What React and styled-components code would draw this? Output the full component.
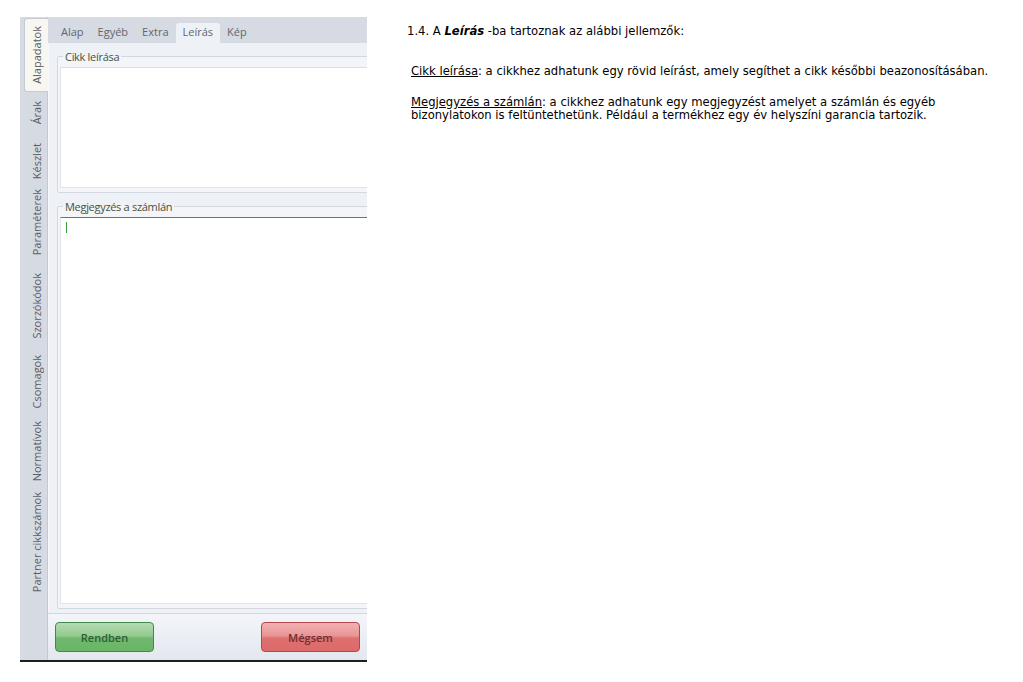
import React from 'react'
import styled, { createGlobalStyle } from 'styled-components'

const sideTabs = [
  { label: 'Alapadatok', h: 74, active: true },
  { label: 'Árak', h: 42 },
  { label: 'Készlet', h: 54 },
  { label: 'Paraméterek', h: 68 },
  { label: 'Szorzókódok', h: 100 },
  { label: 'Csomagok', h: 52 },
  { label: 'Normatívok', h: 86 },
  { label: 'Partner cikkszámok', h: 96 },
]

const topTabs = ['Alap', 'Egyéb', 'Extra', 'Leírás', 'Kép']

const App = () => {
  return (
    <Page>
      <GlobalStyle />
      <Window>
        <SideStrip>
          {sideTabs.map((t) => (
            <SideTab key={t.label} $h={t.h} $active={t.active}>
              <SideLabel>{t.label}</SideLabel>
            </SideTab>
          ))}
        </SideStrip>
        <Main>
          <TopTabs>
            {topTabs.map((t) => (
              <TopTab key={t} $active={t === 'Leírás'}>{t}</TopTab>
            ))}
          </TopTabs>
          <Content>
            <Group>
              <Legend>Cikk leírása</Legend>
              <Field $h={121} />
            </Group>
            <Group>
              <Legend>Megjegyzés a számlán</Legend>
              <Field $h={387} $focused>
                <Caret />
              </Field>
            </Group>
          </Content>
          <ButtonBar>
            <Button $kind="ok">Rendben</Button>
            <Button $kind="cancel">Mégsem</Button>
          </ButtonBar>
        </Main>
      </Window>

      <Doc>
        <Para>
          1.4. A <Strong>Leírás</Strong> -ba tartoznak az alábbi jellemzők:
        </Para>
        <Para $gap={27} $indent>
          <U>Cikk leírása</U>: a cikkhez adhatunk egy rövid leírást, amely segíthet a cikk későbbi beazonosításában.
        </Para>
        <Para $gap={18} $indent>
          <U>Megjegyzés a számlán</U>: a cikkhez adhatunk egy megjegyzést amelyet a számlán és egyéb
          <br />
          bizonylatokon is feltüntethetünk. Például a termékhez egy év helyszíni garancia tartozik.
        </Para>
      </Doc>
    </Page>
  )
}

const GlobalStyle = createGlobalStyle`
  html, body {
    margin: 0;
    padding: 0;
    background: #fff;
  }
  body {
    font-family: "Open Sans", "DejaVu Sans", sans-serif;
  }
`

const Page = styled.div`
  display: flex;
  align-items: flex-start;
  padding: 17px 0 0 20px;
`

const Window = styled.div`
  display: flex;
  width: 347px;
  height: 643px;
  border-bottom: 2px solid #1e1e1e;
  overflow: hidden;
  background: #d6dae2;
`

const SideStrip = styled.div`
  display: flex;
  flex-direction: column;
  width: 23px;
  padding: 1px 0 0 4px;
  background: #d6dae2;
  border-right: 1px solid #c3c9d3;
`

const SideTab = styled.div`
  display: flex;
  align-items: center;
  justify-content: center;
  height: ${(p) => p.$h}px;
  box-sizing: border-box;
  background: ${(p) => (p.$active ? '#f7f6f0' : 'transparent')};
  border: 1px solid ${(p) => (p.$active ? '#c6cbd3' : 'transparent')};
  border-right: none;
  border-radius: 3px 0 0 3px;
  margin-right: -1px;
`

const SideLabel = styled.span`
  writing-mode: vertical-rl;
  transform: rotate(180deg);
  font-size: 11px;
  color: #5a5f66;
  white-space: nowrap;
`

const Main = styled.div`
  flex: 1;
  display: flex;
  flex-direction: column;
  min-width: 0;
`

const TopTabs = styled.div`
  display: flex;
  align-items: flex-end;
  height: 26px;
  padding-left: 6px;
  background: #d6dae3;
`

const TopTab = styled.div`
  height: 20px;
  line-height: 18px;
  padding: 0 7px;
  font-size: 11px;
  color: #62676e;
  background: ${(p) => (p.$active ? '#eef1f6' : 'transparent')};
  border-radius: 3px 3px 0 0;
`

const Content = styled.div`
  flex: 1;
  display: flex;
  flex-direction: column;
  gap: 6px;
  padding: 6px 0 0 8px;
  background: #eef1f6;
  border-left: 1px solid #f7f8fb;
`

const Group = styled.fieldset`
  display: block;
  margin: 0 -4px 0 0;
  padding: 3px 2px 4px 2px;
  border: 1px solid #d3d8e0;
  border-radius: 2px;
  background: #f3f5f9;
`

const Legend = styled.legend`
  padding: 0 2px;
  margin-left: 3px;
  font-size: 11px;
  line-height: 15px;
  letter-spacing: -0.3px;
  color: #44513f;
`

const Field = styled.div`
  box-sizing: border-box;
  height: ${(p) => p.$h}px;
  background: #fff;
  border: 1px solid #dfe3ea;
  border-top-color: ${(p) => (p.$focused ? '#5a7896' : '#d9dee6')};
  padding: 4px 5px;
`

const Caret = styled.div`
  width: 1px;
  height: 11px;
  background: #3c9b3c;
`

const ButtonBar = styled.div`
  display: flex;
  align-items: center;
  justify-content: space-between;
  height: 46px;
  padding: 0 7px 0 7px;
  background: linear-gradient(#f3f5f9, #e3e7ee);
  border-top: 1px solid #d2d8e0;
`

const Button = styled.div`
  width: 97px;
  height: 28px;
  display: flex;
  align-items: center;
  justify-content: center;
  border-radius: 4px;
  font-size: 11px;
  font-weight: 600;
  border: 1px solid ${(p) => (p.$kind === 'ok' ? '#3f8a46' : '#b4474b')};
  color: ${(p) => (p.$kind === 'ok' ? '#2f5d35' : '#6e2f33')};
  background: ${(p) =>
    p.$kind === 'ok'
      ? 'linear-gradient(#b5dcb2 0%, #93cb90 45%, #6fb86d 55%, #6ab568 100%)'
      : 'linear-gradient(#f2b1b1 0%, #e99595 45%, #df6f6f 55%, #dc6a6a 100%)'};
`

const Doc = styled.div`
  margin-left: 40px;
  padding-top: 8px;
  font-family: "DejaVu Sans", "Liberation Sans", sans-serif;
  font-size: 11.6px;
  line-height: 13px;
  color: #000;
`

const Para = styled.p`
  margin: ${(p) => p.$gap || 0}px 0 0 ${(p) => (p.$indent ? 4 : 0)}px;
  white-space: nowrap;
`

const Strong = styled.b`
  font-style: italic;
`

const U = styled.span`
  text-decoration: underline;
`

export default App
